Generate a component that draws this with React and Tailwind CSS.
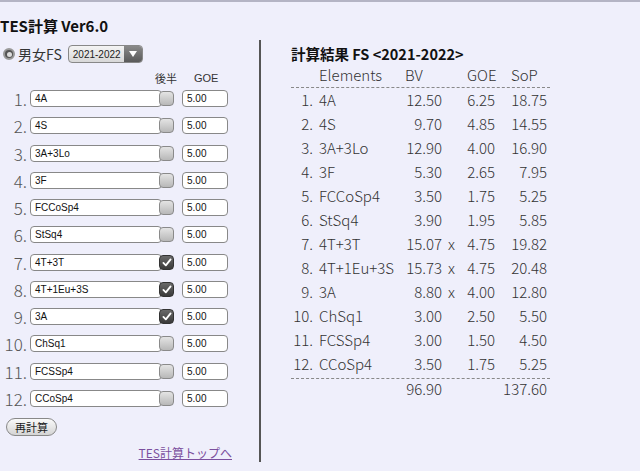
import React from "react";

const left = [
  ["4A", false],
  ["4S", false],
  ["3A+3Lo", false],
  ["3F", false],
  ["FCCoSp4", false],
  ["StSq4", false],
  ["4T+3T", true],
  ["4T+1Eu+3S", true],
  ["3A", true],
  ["ChSq1", false],
  ["FCSSp4", false],
  ["CCoSp4", false],
];

const res = [
  ["4A", "12.50", false, "6.25", "18.75"],
  ["4S", "9.70", false, "4.85", "14.55"],
  ["3A+3Lo", "12.90", false, "4.00", "16.90"],
  ["3F", "5.30", false, "2.65", "7.95"],
  ["FCCoSp4", "3.50", false, "1.75", "5.25"],
  ["StSq4", "3.90", false, "1.95", "5.85"],
  ["4T+3T", "15.07", true, "4.75", "19.82"],
  ["4T+1Eu+3S", "15.73", true, "4.75", "20.48"],
  ["3A", "8.80", true, "4.00", "12.80"],
  ["ChSq1", "3.00", false, "2.50", "5.50"],
  ["FCSSp4", "3.00", false, "1.50", "4.50"],
  ["CCoSp4", "3.50", false, "1.75", "5.25"],
];

const jp = { fontFamily: '"Noto Sans CJK JP", "Noto Sans", sans-serif' };
const ar = { fontFamily: '"Liberation Sans", Arial, sans-serif' };

function Check({ on }) {
  if (on) {
    return (
      <div className="relative z-10 ml-[-3px] w-[15px] h-[15px] rounded-[4px] bg-gradient-to-b from-[#6a6a6a] to-[#3a3a3a] border border-[#333] flex items-center justify-center">
        <svg width="10" height="9" viewBox="0 0 11 10">
          <path d="M1.5 5.5 L4.2 8.2 L9.5 1.5" fill="none" stroke="#fff" strokeWidth="2" strokeLinecap="round" strokeLinejoin="round" />
        </svg>
      </div>
    );
  }
  return (
    <div className="relative z-10 ml-[-3px] w-[15px] h-[15px] rounded-[4px] bg-gradient-to-b from-[#e4e4e4] to-[#b8b8b8] border border-[#8a8a8a]" />
  );
}

export default function App() {
  return (
    <div className="w-[640px] h-[471px] bg-[#efeffb] border-t-2 border-[#b4b4c4] overflow-hidden text-[#333]" style={jp}>
      <div className="pt-[14px] h-[38px] text-[15px] leading-[20px] font-bold text-[#111]" style={jp}>TES計算 Ver6.0</div>
      <div className="flex h-[422px]">
        <div className="w-[259px] flex flex-col">
          <div className="flex items-center h-[20px] mt-[4px] pl-[3px]">
            <div className="w-[12px] h-[12px] rounded-full bg-[#555] border-2 border-[#999] flex items-center justify-center">
              <div className="w-[5px] h-[5px] rounded-full bg-[#ddd]" />
            </div>
            <span className="ml-[3px] text-[14px] text-[#333]">男女FS</span>
            <div className="ml-[6px] flex items-center h-[18px] w-[75px] rounded-[4px] border border-[#888] bg-gradient-to-b from-[#f4f4f4] to-[#d8d8d8] overflow-hidden">
              <span className="flex-1 text-[10px] pl-[4px] text-[#222]" style={ar}>2021-2022</span>
              <div className="w-[18px] h-full bg-gradient-to-b from-[#8a8a8a] to-[#5a5a5a] flex items-center justify-center">
                <svg width="8" height="6" viewBox="0 0 8 6"><path d="M0 0 L8 0 L4 6 Z" fill="#fff" /></svg>
              </div>
            </div>
          </div>
          <div className="flex h-[21px] pt-[7px] text-[11px] leading-[14px] text-[#333]">
            <span className="ml-[155px]">後半</span>
            <span className="ml-[17px]" style={ar}>GOE</span>
          </div>
          {left.map(([name, on], i) => (
            <div key={i} className="flex items-center h-[27.5px]">
              <div className="w-[27px] text-right text-[17px] font-light text-[#555] leading-none">{i + 1}.</div>
              <div className="ml-[3px] w-[132px] h-[17px] rounded-[4px] border border-[#888] bg-white flex items-center pl-[4px] text-[10px] text-[#111]" style={ar}>{name}</div>
              <Check on={on} />
              <div className="ml-[8px] w-[46px] h-[17px] rounded-[4px] border border-[#888] bg-white flex items-center pl-[4px] text-[10px] text-[#111]" style={ar}>5.00</div>
            </div>
          ))}
          <div className="mt-[6px] ml-[6px] w-[51px] h-[18px] rounded-full border border-[#888] bg-gradient-to-b from-[#fafafa] to-[#d4d4d4] flex items-center justify-center text-[11px] text-[#222]">再計算</div>
          <div className="mt-[8px] flex justify-end pr-[27px]">
            <span className="text-[12px] text-[#7b4f9e] underline">TES計算トップへ</span>
          </div>
        </div>
        <div className="flex-1 border-l-2 border-[#555] pl-[30px]">
          <div className="mt-[5px] text-[14.5px] leading-[18px] font-bold text-[#111]">計算結果 FS &lt;2021-2022&gt;</div>
          <div className="w-[259px] text-[15px] font-light text-[#333]">
            <div className="flex items-center h-[24px]">
              <span className="ml-[28px] w-[86px]">Elements</span>
              <span className="w-[23px]">BV</span>
              <span className="ml-[39px] w-[44px]">GOE</span>
              <span>SoP</span>
            </div>
            <div className="border-t border-dashed border-[#888]" />
            {res.map(([n, bv, x, g, s], i) => (
              <div key={i} className="flex items-center h-[24px]">
                <span className="w-[22px] text-right">{i + 1}.</span>
                <span className="ml-[6px] w-[83px] whitespace-nowrap">{n}</span>
                <span className="w-[40px] text-right">{bv}</span>
                <span className="w-[15px] pl-[6px]">{x ? "x" : ""}</span>
                <span className="w-[38px] text-right">{g}</span>
                <span className="w-[52px] text-right">{s}</span>
              </div>
            ))}
            <div className="border-t border-dashed border-[#888] mt-[2px]" />
            <div className="flex items-center h-[20px]">
              <span className="w-[151px] text-right">96.90</span>
              <span className="w-[105px] text-right">137.60</span>
            </div>
          </div>
        </div>
      </div>
    </div>
  );
}
